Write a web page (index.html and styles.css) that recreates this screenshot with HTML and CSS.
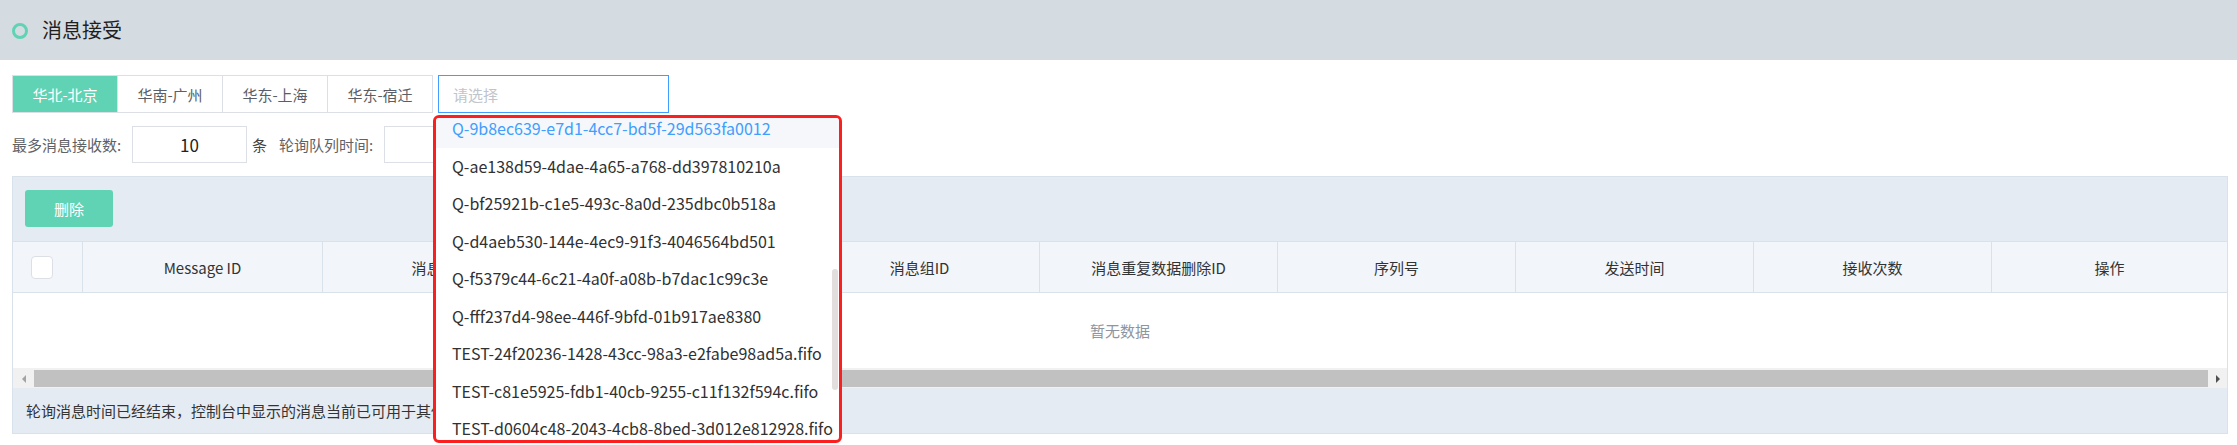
FILE: index.html
```html
<!DOCTYPE html>
<html lang="zh-CN">
<head>
<meta charset="utf-8">
<title>消息接受</title>
<link rel="stylesheet" href="styles.css">
</head>
<body>
<div class="page-header">
  <span class="header-dot"></span>
  <span class="header-title">消息接受</span>
</div>
<div class="content">
  <div class="region-row">
    <div class="region-tab active">华北-北京</div>
    <div class="region-tab">华南-广州</div>
    <div class="region-tab">华东-上海</div>
    <div class="region-tab">华东-宿迁</div>
    <div class="queue-select">请选择</div>
  </div>
  <div class="param-row">
    <span class="param-label">最多消息接收数:</span>
    <div class="param-input">10</div>
    <span class="param-unit">条</span>
    <span class="param-label2">轮询队列时间:</span>
    <div class="param-input"></div>
  </div>
  <div class="panel">
    <div class="toolbar"><div class="btn-delete">删除</div></div>
    <div class="thead">
      <div class="th th-check"><span class="checkbox"></span></div>
      <div class="th">Message ID</div>
      <div class="th">消息内容</div>
      <div class="th"></div>
      <div class="th">消息组ID</div>
      <div class="th">消息重复数据删除ID</div>
      <div class="th">序列号</div>
      <div class="th">发送时间</div>
      <div class="th">接收次数</div>
      <div class="th">操作</div>
    </div>
    <div class="tbody-empty">暂无数据</div>
    <div class="hscroll">
      <div class="hs-btn"><span class="tri-left"></span></div>
      <div class="hs-thumb"></div>
      <div class="hs-btn"><span class="tri-right"></span></div>
    </div>
    <div class="panel-footer">轮询消息时间已经结束，控制台中显示的消息当前已可用于其他应用程序。</div>
  </div>
</div>

<div class="dropdown">
  <ul class="dd-list">
    <li class="dd-item selected">Q-9b8ec639-e7d1-4cc7-bd5f-29d563fa0012</li>
    <li class="dd-item">Q-ae138d59-4dae-4a65-a768-dd397810210a</li>
    <li class="dd-item">Q-bf25921b-c1e5-493c-8a0d-235dbc0b518a</li>
    <li class="dd-item">Q-d4aeb530-144e-4ec9-91f3-4046564bd501</li>
    <li class="dd-item">Q-f5379c44-6c21-4a0f-a08b-b7dac1c99c3e</li>
    <li class="dd-item">Q-fff237d4-98ee-446f-9bfd-01b917ae8380</li>
    <li class="dd-item">TEST-24f20236-1428-43cc-98a3-e2fabe98ad5a.fifo</li>
    <li class="dd-item">TEST-c81e5925-fdb1-40cb-9255-c11f132f594c.fifo</li>
    <li class="dd-item">TEST-d0604c48-2043-4cb8-8bed-3d012e812928.fifo</li>
  </ul>
  <div class="dd-thumb"></div>
</div>
</body>
</html>
```
FILE: styles.css
```css
* { box-sizing: border-box; }
html, body { margin: 0; padding: 0; }
body {
  width: 2237px;
  height: 445px;
  overflow: hidden;
  position: relative;
  background: #fff;
  font-family: "Noto Sans CJK SC", "Open Sans", sans-serif;
  font-size: 15px;
  color: #303133;
}
.page-header {
  height: 60px;
  background: #d5dce1;
  display: flex;
  align-items: center;
  padding-left: 12px;
}
.header-dot {
  width: 16px;
  height: 16px;
  border: 3.5px solid #5fd3b3;
  border-radius: 50%;
  margin-top: 2px;
}
.header-title {
  margin-left: 14px;
  font-size: 20px;
  line-height: 1;
  color: #1f1f1f;
}
.content { padding: 15px 9px 0 12px; }

.region-row { display: flex; height: 38px; }
.region-tab {
  width: 106px;
  border: 1px solid #dcdfe6;
  margin-left: -1px;
  display: flex;
  align-items: center;
  justify-content: center;
  color: #5a5e66;
  background: #fff;
}
.region-tab:first-child { margin-left: 0; }
.region-tab.active { background: #5fd3b3; color: #fff; }
.queue-select {
  margin-left: 5px;
  width: 231px;
  border: 1px solid #409eff;
  display: flex;
  align-items: center;
  padding-left: 14px;
  color: #c0c4cc;
}

.param-row {
  display: flex;
  align-items: center;
  height: 37px;
  margin-top: 13px;
  color: #606266;
}
.param-label { width: 120px; white-space: nowrap; }
.param-input {
  width: 115px;
  height: 37px;
  border: 1px solid #dcdfe6;
  display: flex;
  align-items: center;
  justify-content: center;
  font-size: 17px;
  color: #222;
}
.param-unit { margin-left: 5px; width: 15px; color: #444; }
.param-label2 { margin-left: 12px; width: 105px; white-space: nowrap; }

.panel {
  margin-top: 13px;
  border: 1px solid #d9e1ea;
  background: #e5ebf3;
}
.toolbar { padding: 13px 12px 14px 12px; }
.btn-delete {
  width: 88px;
  height: 37px;
  background: #5fd3b3;
  border-radius: 3px;
  color: #fff;
  display: flex;
  align-items: center;
  justify-content: center;
}
.thead {
  display: grid;
  grid-template-columns: 69px 240px 238px 239px 240px 238px 238px 238px 238px 1fr;
  height: 52px;
  background: #f2f5fa;
  border-top: 1px solid #d9e1ea;
  border-bottom: 1px solid #d9e1ea;
}
.th {
  display: flex;
  align-items: center;
  justify-content: center;
  color: #333;
  border-left: 1px solid #d9e1ea;
  white-space: nowrap;
  overflow: hidden;
}
.th-check { border-left: none; justify-content: flex-start; padding-left: 18px; }
.checkbox {
  width: 22px;
  height: 23px;
  background: #fff;
  border: 1px solid #dcdfe6;
  border-radius: 4px;
}
.tbody-empty {
  height: 75px;
  background: #fff;
  display: flex;
  align-items: center;
  justify-content: center;
  color: #8e959e;
}
.hscroll {
  height: 20px;
  background: #f1f1f1;
  display: flex;
  padding: 2px 0 1px 0;
}
.hs-btn {
  width: 21px;
  display: flex;
  align-items: center;
  justify-content: center;
}
.hs-btn:last-child { width: 19px; }
.hs-thumb { flex: 1; background: #c1c1c1; }
.tri-left {
  width: 0; height: 0;
  border-top: 4px solid transparent;
  border-bottom: 4px solid transparent;
  border-right: 4px solid #a3a3a3;
}
.tri-right {
  width: 0; height: 0;
  border-top: 4px solid transparent;
  border-bottom: 4px solid transparent;
  border-left: 4px solid #505050;
}
.panel-footer {
  height: 45px;
  display: flex;
  align-items: center;
  padding-left: 13px;
  color: #333;
  white-space: nowrap;
}

.dropdown {
  position: absolute;
  left: 433px;
  top: 115px;
  width: 409px;
  height: 328px;
  border: 3px solid #fb2020;
  border-radius: 6px;
  background: #fff;
  overflow: hidden;
}
.dd-list {
  list-style: none;
  margin: -8px 0 0 0;
  padding: 0;
}
.dd-item {
  height: 37.5px;
  line-height: 37.5px;
  padding: 0 16px;
  white-space: nowrap;
  color: #303133;
  font-size: 16px;
}
.dd-item.selected { background: #f5f7fa; color: #409eff; }
.dd-thumb {
  position: absolute;
  right: 1px;
  top: 151px;
  width: 6px;
  height: 121px;
  border-radius: 3px;
  background: #e3dede;
}
```
